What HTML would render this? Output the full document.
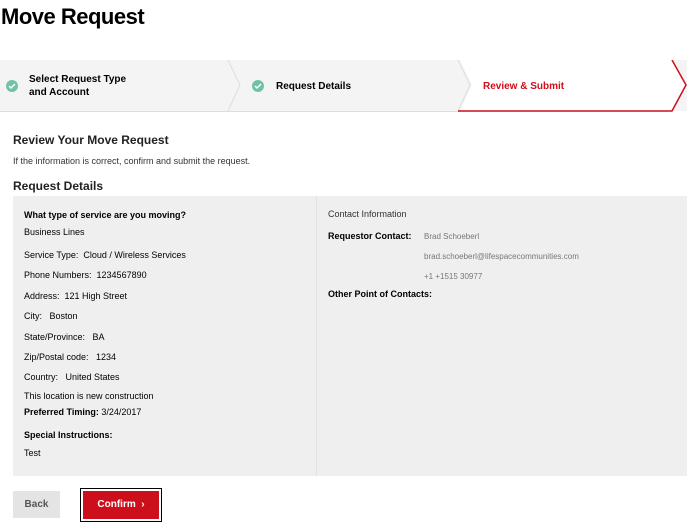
<!DOCTYPE html>
<html><head><meta charset="utf-8"><style>
*{margin:0;padding:0;box-sizing:border-box}
body{width:687px;height:523px;background:#fff;font-family:"Liberation Sans",Arial,sans-serif;color:#000;position:relative;overflow:hidden}
.a{position:absolute;white-space:nowrap}
.s{font-size:9px}
.b{font-weight:bold}
</style></head><body>
<div class="a b" style="left:1px;top:4px;font-size:22px;letter-spacing:-0.5px">Move Request</div>
<svg class="a" style="left:0;top:60px" width="687" height="54">
<rect x="0" y="0" width="687" height="51" fill="#f4f4f4"/>
<polygon points="460,0 672,0 686,25 672,51 460,51 472,25" fill="#fff"/>
<polyline points="228,0 240,25 228,51" fill="none" stroke="#ddd" stroke-width="1"/>
<polyline points="458,0 470,25 458,51" fill="none" stroke="#ddd" stroke-width="1"/>
<line x1="0" y1="51.5" x2="460" y2="51.5" stroke="#ddd"/>
<polyline points="458,51 672,51 686,25 672,0" fill="none" stroke="#cd0f1b" stroke-width="1.5"/>
<circle cx="12" cy="26" r="6" fill="#6fc3a4"/><path d="M9 26l2 2 4-4" stroke="#fff" stroke-width="1.5" fill="none"/>
<circle cx="258" cy="26" r="6" fill="#6fc3a4"/><path d="M255 26l2 2 4-4" stroke="#fff" stroke-width="1.5" fill="none"/>
</svg>
<div class="a b" style="left:29px;top:73px;font-size:10px;line-height:13px">Select Request Type<br>and Account</div>
<div class="a b" style="left:276px;top:81px;font-size:10px">Request Details</div>
<div class="a b" style="left:483px;top:81px;font-size:10px;color:#cd0f1b">Review &amp; Submit</div>
<div class="a b" style="left:13px;top:133px;font-size:12px;color:#222">Review Your Move Request</div>
<div class="a s" style="left:13px;top:156px;color:#333">If the information is correct, confirm and submit the request.</div>
<div class="a b" style="left:13px;top:179px;font-size:12px;color:#222">Request Details</div>
<div class="a" style="left:13px;top:196px;width:674px;height:280px;background:#efefef"></div>
<div class="a" style="left:316px;top:196px;width:1px;height:280px;background:#e2e2e2"></div>
<div class="a s b" style="left:24px;top:210px">What type of service are you moving?</div>
<div class="a s" style="left:24px;top:227px">Business Lines</div>
<div class="a s" style="left:24px;top:250px">Service Type:&nbsp; Cloud / Wireless Services</div>
<div class="a s" style="left:24px;top:270px">Phone Numbers:&nbsp; 1234567890</div>
<div class="a s" style="left:24px;top:291px">Address:&nbsp; 121 High Street</div>
<div class="a s" style="left:24px;top:311px">City:&nbsp;&nbsp; Boston</div>
<div class="a s" style="left:24px;top:332px">State/Province:&nbsp;&nbsp; BA</div>
<div class="a s" style="left:24px;top:352px">Zip/Postal code:&nbsp;&nbsp; 1234</div>
<div class="a s" style="left:24px;top:372px">Country:&nbsp;&nbsp; United States</div>
<div class="a s" style="left:24px;top:391px">This location is new construction</div>
<div class="a s" style="left:24px;top:407px"><b>Preferred Timing:</b> 3/24/2017</div>
<div class="a s b" style="left:24px;top:430px">Special Instructions:</div>
<div class="a s" style="left:24px;top:448px">Test</div>
<div class="a s" style="left:328px;top:209px;color:#333">Contact Information</div>
<div class="a s b" style="left:328px;top:231px">Requestor Contact:</div>
<div class="a" style="left:424px;top:232px;font-size:8px;color:#777">Brad Schoeberl</div>
<div class="a" style="left:424px;top:252px;font-size:8px;color:#777">brad.schoeberl@lifespacecommunities.com</div>
<div class="a" style="left:424px;top:272px;font-size:8px;color:#777">+1 +1515 30977</div>
<div class="a s b" style="left:328px;top:289px">Other Point of Contacts:</div>
<div class="a b" style="left:13px;top:491px;width:47px;height:27px;background:#e4e4e4;color:#555;font-size:10px;line-height:27px;text-align:center">Back</div>
<div class="a" style="left:80px;top:488px;width:82px;height:34px;border:1px solid #000;padding:2px"><div style="background:#cd0f1b;color:#fff;font-weight:bold;font-size:10px;height:28px;line-height:28px;text-align:center">Confirm &nbsp;›</div></div>
</body></html>
